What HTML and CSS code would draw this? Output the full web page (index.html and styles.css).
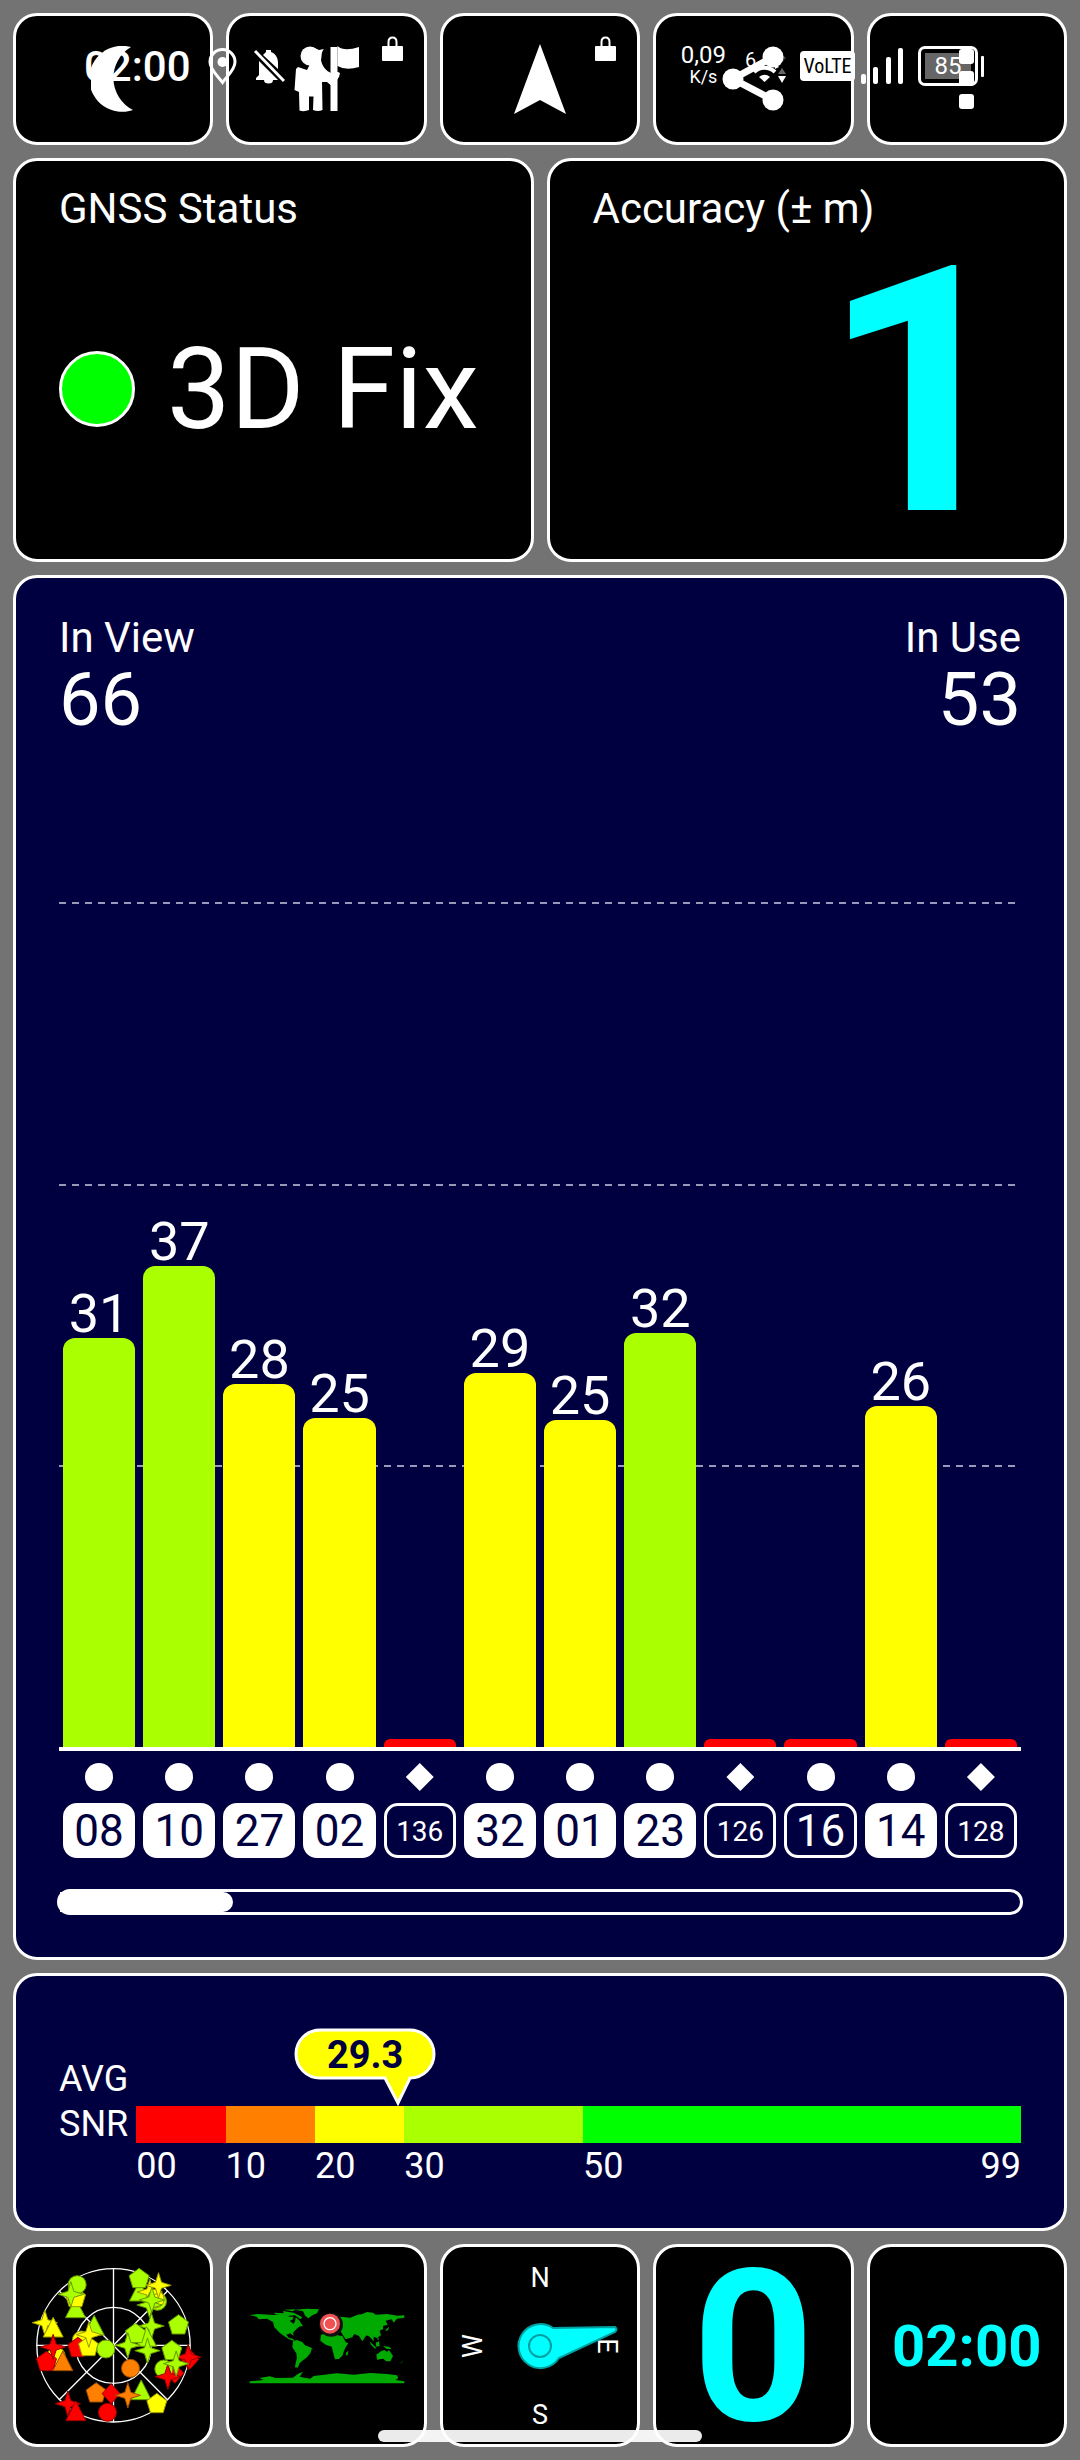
FILE: index.html
```html
<!DOCTYPE html>
<html lang="en">
<head>
    <meta charset="UTF-8">
    <meta name="viewport" content="width=device-width, initial-scale=1.0">
    <title>GNSS Status</title>
    <link rel="stylesheet" href="styles.css">
</head>
<body>
    <!-- System status bar, sits between the toolbar tiles and their icons -->
    <div class="status-bar">
        <div class="status-left">
            <span class="status-time">02:00</span>
            <svg width="29" height="37" viewBox="0 0 29 37" fill="none" stroke="#fff" stroke-width="3">
                <path d="M14.500 34.500C10 28 2 22 2 14A12.500 12.500 0 0 1 27 14C27 22 19 28 14.500 34.500Z"/>
                <circle cx="14.500" cy="14" r="5" fill="#fff" stroke="none"/>
            </svg>
            <svg width="31" height="35" viewBox="0 0 31 35" fill="#fff">
                <path d="M5 12L24 31H2V29L5 26Z"/>
                <path d="M9 6L12 3V1H17V3C22 5 24 9 24 14V20Z"/>
                <path d="M10 31H19A4.500 3.500 0 0 1 10 31Z"/>
                <path d="M1 2L30 32" stroke="#fff" stroke-width="3"/>
            </svg>
        </div>
        <div class="status-right">
            <span class="net-speed"><span>0,09</span><small>K/s</small></span>
            <svg width="46" height="37" viewBox="0 0 46 37">
                <text x="5" y="19" class="wifi-gen">6</text>
                <path d="M25 5A28 28 0 0 1 44 12" fill="none" stroke="#444" stroke-width="6"/>
                <path d="M14 24A15 15 0 0 1 35 24" fill="none" stroke="#fff" stroke-width="4"/>
                <path d="M34 14L39 19L35 21Z" fill="#fff"/>
                <path d="M24.500 34L19 29A8 8 0 0 1 30 29Z" fill="#fff"/>
                <path d="M38 26L42 20L46 26Z" fill="#666"/>
                <path d="M38 28H46L42 35Z" fill="#fff"/>
            </svg>
            <span class="signal">
                <span class="volte">VoLTE</span>
                <svg width="43" height="36" viewBox="0 0 43 36" fill="#fff">
                    <rect x="0" y="26" width="5" height="10" rx="2"/>
                    <rect x="12" y="19" width="5" height="17" rx="2"/>
                    <rect x="25" y="9" width="5" height="27" rx="2"/>
                    <rect x="37" y="0" width="5" height="36" rx="2"/>
                </svg>
            </span>
            <span class="battery"><span>85</span></span>
        </div>
    </div>

    <main class="app">
        <div class="tiles toolbar">
            <button class="tile" aria-label="Night mode">
                <svg width="44" height="66" viewBox="0 0 44 66" fill="#fff">
                    <path d="M40 1A33 33 0 1 0 42 64A36 36 0 0 1 40 1Z"/>
                </svg>
            </button>
            <button class="tile" aria-label="Waypoints">
                <svg width="65" height="66" viewBox="0 0 65 66" fill="#fff">
                    <circle cx="16" cy="10" r="9.500"/>
                    <path d="M18 1L25 4L30 3C27 6 28 10 27 14C28 20 32 25 37 27V26H44L46 27L45 31L40 38L36.500 39L33 36H28L28.500 64Q24 66 19 64L19.500 50.500H15V64Q10 66 5.500 64.500L5 46L0.500 44L2 23L4 21L13 24L16 18Z"/>
                    <path d="M36.500 1H43.500V65H36.500Z"/>
                    <path d="M43.500 0Q50 6 65 1V21Q52 25 43.500 20Z"/>
                </svg>
                <svg class="lock" width="21" height="25" viewBox="0 0 21 25">
                    <path d="M6.500 12V6Q6.500 1.500 10.500 1.500T14.500 6V12" fill="none" stroke="#fff" stroke-width="2"/>
                    <rect y="10" width="21" height="15" rx="1" fill="#fff"/>
                </svg>
            </button>
            <button class="tile" aria-label="Navigate">
                <svg width="52" height="70" viewBox="0 0 52 70" fill="#fff">
                    <path d="M26 0L52 70L26 56L0 70Z"/>
                </svg>
                <svg class="lock" width="21" height="25" viewBox="0 0 21 25">
                    <path d="M6.500 12V6Q6.500 1.500 10.500 1.500T14.500 6V12" fill="none" stroke="#fff" stroke-width="2"/>
                    <rect y="10" width="21" height="15" rx="1" fill="#fff"/>
                </svg>
            </button>
            <button class="tile" aria-label="Share">
                <svg width="62" height="66" viewBox="0 0 62 66" fill="#fff">
                    <path d="M51 11L11 33L51 54" fill="none" stroke="#fff" stroke-width="7"/>
                    <circle cx="51" cy="11" r="10.500"/>
                    <circle cx="11" cy="33" r="10.500"/>
                    <circle cx="51" cy="54" r="10.500"/>
                </svg>
            </button>
            <button class="tile" aria-label="More">
                <svg width="15" height="60" viewBox="0 0 15 60" fill="#fff">
                    <rect width="15" height="15" rx="3"/>
                    <rect y="22" width="15" height="15" rx="3"/>
                    <rect y="45" width="15" height="15" rx="3"/>
                </svg>
            </button>
        </div>

        <div class="readouts">
            <section class="readout">
                <h2>GNSS Status</h2>
                <div class="fix"><span class="led"></span>3D Fix</div>
            </section>
            <section class="readout">
                <h2>Accuracy (± m)</h2>
                <div class="accuracy">1</div>
            </section>
        </div>

        <section class="panel chart">
            <div class="chart-head">
                <div><h2>In View</h2><strong>66</strong></div>
                <div class="in-use"><h2>In Use</h2><strong>53</strong></div>
            </div>
            <div class="plot">
                <div class="grid-lines"><i></i><i></i><i></i></div>
                <div class="bars">
                    <div class="bar good" style="--h: 48.4%">31</div>
                    <div class="bar good" style="--h: 56.9%">37</div>
                    <div class="bar fair" style="--h: 43%">28</div>
                    <div class="bar fair" style="--h: 38.9%">25</div>
                    <div class="bar none" style="--h: 0.9%"></div>
                    <div class="bar fair" style="--h: 44.3%">29</div>
                    <div class="bar fair" style="--h: 38.7%">25</div>
                    <div class="bar good" style="--h: 49%">32</div>
                    <div class="bar none" style="--h: 0.9%"></div>
                    <div class="bar none" style="--h: 0.9%"></div>
                    <div class="bar fair" style="--h: 40.3%">26</div>
                    <div class="bar none" style="--h: 0.9%"></div>
                </div>
            </div>
            <div class="sats">
                <div class="sat"><i class="dot"></i><b class="used">08</b></div>
                <div class="sat"><i class="dot"></i><b class="used">10</b></div>
                <div class="sat"><i class="dot"></i><b class="used">27</b></div>
                <div class="sat"><i class="dot"></i><b class="used">02</b></div>
                <div class="sat"><i class="diamond"></i><b class="small">136</b></div>
                <div class="sat"><i class="dot"></i><b class="used">32</b></div>
                <div class="sat"><i class="dot"></i><b class="used">01</b></div>
                <div class="sat"><i class="dot"></i><b class="used">23</b></div>
                <div class="sat"><i class="diamond"></i><b class="small">126</b></div>
                <div class="sat"><i class="dot"></i><b>16</b></div>
                <div class="sat"><i class="dot"></i><b class="used">14</b></div>
                <div class="sat"><i class="diamond"></i><b class="small">128</b></div>
            </div>
            <div class="scroll-track"><div class="scroll-thumb"></div></div>
        </section>

        <section class="panel snr">
            <div class="snr-label">AVG<br>SNR</div>
            <div class="snr-scale">
                <div class="snr-bar">
                    <i class="s0"></i><i class="s10"></i><i class="s20"></i><i class="s30"></i><i class="s50"></i>
                    <div class="bubble" style="--snr: 29.3">
                        <svg width="142" height="78" viewBox="0 0 142 78" fill="#ffff00" stroke="#fff" stroke-width="3">
                            <path d="M26 2H116A24 24 0 0 1 116 50L104 75L91 50H26A24 24 0 0 1 26 2Z"/>
                        </svg>
                        <span>29.3</span>
                    </div>
                </div>
                <div class="snr-ticks">
                    <span>00</span><span>10</span><span>20</span><span>30</span><span class="last">50<em>99</em></span>
                </div>
            </div>
        </section>

        <nav class="tiles pages">
            <button class="tile" aria-label="Sky view">
                <svg width="187" height="191" viewBox="0 0 560 573">
                    <defs>
                        <circle id="circ" r="27"/>
                        <path id="star" d="M0 -38L9 -9L38 0L9 9L0 38L-9 9L-38 0L-9 -9Z"/>
                        <path id="pent" d="M0 -31L30 -9L19 27H-19L-30 -9Z"/>
                        <path id="tri" d="M0 -32L30 27H-30Z"/>
                        <path id="diam" d="M0 -30L27 0L0 30L-27 0Z"/>
                    </defs>
                    <g fill="none" stroke="#fff" stroke-width="4">
                        <circle cx="280" cy="286" r="230"/>
                        <circle cx="280" cy="286" r="114"/>
                        <path d="M280 56V516M50 286H510M117 123L442 449M442 123L117 449"/>
                    </g>
                    <g class="sky">
                        <use href="#tri" x="166" y="176" class="g"/>
                        <use href="#pent" x="166" y="143" class="y"/>
                        <use href="#circ" x="171" y="104" class="g"/>
                        <use href="#star" x="152" y="133" class="g"/>
                        <use href="#tri" x="358" y="126" class="g"/>
                        <use href="#pent" x="357" y="86" class="g"/>
                        <use href="#circ" x="412" y="154" class="g"/>
                        <use href="#circ" x="405" y="147" class="y"/>
                        <use href="#star" x="389" y="126" class="y"/>
                        <use href="#star" x="415" y="106" class="y"/>
                        <use href="#star" x="388" y="165" class="g"/>
                        <use href="#star" x="395" y="150" class="g"/>
                        <use href="#star" x="74" y="218" class="y"/>
                        <use href="#tri" x="99" y="234" class="y"/>
                        <use href="#tri" x="222" y="228" class="g"/>
                        <use href="#circ" x="184" y="270" class="y"/>
                        <use href="#pent" x="173" y="293" class="r"/>
                        <use href="#pent" x="205" y="290" class="y"/>
                        <use href="#star" x="206" y="254" class="y"/>
                        <use href="#circ" x="257" y="297" class="g"/>
                        <use href="#star" x="394" y="228" class="g"/>
                        <use href="#tri" x="379" y="262" class="g"/>
                        <use href="#pent" x="346" y="251" class="g"/>
                        <use href="#star" x="323" y="286" class="g"/>
                        <use href="#star" x="382" y="302" class="g"/>
                        <use href="#pent" x="475" y="225" class="g"/>
                        <use href="#circ" x="108" y="318" class="y"/>
                        <use href="#pent" x="79" y="335" class="r"/>
                        <use href="#star" x="99" y="291" class="r"/>
                        <use href="#tri" x="128" y="335" class="o"/>
                        <use href="#circ" x="331" y="355" class="o"/>
                        <use href="#diam" x="509" y="328" class="r"/>
                        <use href="#star" x="504" y="321" class="r"/>
                        <use href="#pent" x="455" y="302" class="g"/>
                        <use href="#diam" x="464" y="370" class="r"/>
                        <use href="#circ" x="431" y="357" class="g"/>
                        <use href="#star" x="443" y="380" class="r"/>
                        <use href="#star" x="468" y="341" class="g"/>
                        <use href="#pent" x="228" y="429" class="o"/>
                        <use href="#tri" x="363" y="422" class="g"/>
                        <use href="#diam" x="273" y="431" class="r"/>
                        <use href="#star" x="323" y="436" class="o"/>
                        <use href="#circ" x="262" y="487" class="r"/>
                        <use href="#pent" x="410" y="461" class="y"/>
                        <use href="#star" x="143" y="461" class="r"/>
                        <use href="#tri" x="167" y="485" class="r"/>
                    </g>
                </svg>
            </button>
            <button class="tile" aria-label="World map">
                <svg width="160" height="80" viewBox="740 230 480 240">
                    <g fill="#00aa00">
                        <path d="M748 258L772 254L820 257L850 256L868 262L880 262L876 272L868 274L880 284L884 276L886 264L896 272L902 282L908 290L896 292L888 300L878 310L880 320L870 312L858 316L866 326L878 328L884 336L866 330L848 318L838 310L822 294L818 278L800 268L776 270L768 262Z"/>
                        <path d="M822 250L850 252L848 245L880 250L892 256L906 264L900 270L884 258L860 260L824 255ZM850 241L885 240L878 246Z"/>
                        <path d="M884 241L920 238L956 240L950 252L936 258L924 267L915 260L908 246Z"/>
                        <path d="M878 336L890 332L906 338L914 348L935 356L930 372L920 384L906 394L898 402L892 415L884 414L886 400L890 386L888 372L876 354Z"/>
                        <path d="M962 316L984 311L1002 316L1026 320L1036 338L1044 342L1036 354L1031 364L1027 378L1016 389L1004 390L999 372L994 352L976 346L960 334ZM1037 370L1044 364L1042 378H1037Z"/>
                        <path d="M966 310L966 300L980 294L990 280L1000 266L1020 262L1050 265L1072 256L1086 254L1100 248L1118 250L1126 256L1160 254L1192 259L1212 258V265L1190 268L1180 280L1174 270L1156 274L1162 286L1148 290L1148 300L1138 304L1142 318L1130 326L1120 322L1120 336L1108 322L1098 318L1086 336L1076 320L1062 314L1056 324L1036 330L1028 318L1022 308L1000 306L984 308Z"/>
                        <path d="M1108 336L1120 348L1128 356L1124 358L1112 346ZM1126 340L1136 336L1138 350L1128 352ZM1130 320L1136 330L1132 332ZM1148 350L1166 352L1174 360L1158 358ZM1158 300L1166 292L1164 302L1154 306Z"/>
                        <path d="M1128 376L1142 366L1152 362L1160 368L1166 362L1178 380L1170 396L1158 396L1148 388L1130 391ZM1204 398L1210 394L1198 405Z"/>
                        <path d="M748 456L790 452L778 446L808 441L826 446L878 445L892 434L908 427L898 442L930 448L940 440L1010 432L1060 436L1110 431L1160 434L1190 438L1194 446L1186 452L1212 456V462H748Z"/>
                    </g>
                    <circle cx="992" cy="286" r="36" fill="#111"/>
                    <circle cx="989" cy="283" r="30" fill="#ee5253"/>
                    <circle cx="989" cy="283" r="18" fill="none" stroke="#fff" stroke-width="4"/>
                </svg>
            </button>
            <button class="tile" aria-label="Compass">
                <svg width="180" height="180" viewBox="-90 -90 180 180">
                    <g class="compass-letters">
                        <text y="-59">N</text>
                        <text y="78">S</text>
                        <text y="-58" transform="rotate(-90)">W</text>
                        <text y="-58" transform="rotate(90)">E</text>
                    </g>
                    <path d="M13 -18L75 -19Q78 -17 75 -14L19 12A22 22 0 1 1 13 -18Z" fill="#00ffff" stroke="#00a0a0" stroke-width="2"/>
                    <circle r="11" fill="none" stroke="#00a0a0" stroke-width="2"/>
                </svg>
            </button>
            <button class="tile speed">0</button>
            <button class="tile clock">02:00</button>
        </nav>
    </main>

    <div class="home-indicator"></div>
</body>
</html>
```
FILE: styles.css
```css
* {
    box-sizing: border-box;
}

body {
    margin: 0;
    position: relative;
    background-color: #737373;
    color: #fff;
    font-family: Roboto, sans-serif;
}

h2 {
    margin: 0;
    font-size: 42px;
    line-height: 48px;
    font-weight: 400;
}

.app {
    display: flex;
    flex-direction: column;
    gap: 13px;
    min-height: 100vh;
    padding: 13px;
}

/* tiles */
.tiles {
    display: grid;
    grid-template-columns: repeat(5, 1fr);
    gap: 13px;
}

.toolbar {
    grid-auto-rows: 132px;
}

.toolbar svg {
    z-index: 2;
}

.pages {
    grid-auto-rows: 203px;
}

.tile {
    position: relative;
    display: flex;
    align-items: center;
    justify-content: center;
    min-width: 0;
    padding: 0;
    background-color: #000;
    color: #00ffff;
    border: 3px solid #fff;
    border-radius: 24px;
    font-family: inherit;
    font-weight: 700;
    cursor: pointer;
}

.lock {
    position: absolute;
    top: 20px;
    right: 21px;
}

.speed {
    padding-top: 4px;
    font-size: 212px;
    line-height: 192px;
}

.clock {
    font-size: 58px;
}

.sky {
    stroke-width: 3;
}

.sky .g {
    fill: #aaff00;
    stroke: #669900;
}

.sky .y {
    fill: #ffff00;
    stroke: #999900;
}

.sky .o {
    fill: #ff8000;
    stroke: #994d00;
}

.sky .r {
    fill: #ff0000;
    stroke: #990000;
}

.compass-letters {
    fill: #fff;
    font-size: 27px;
    font-weight: 400;
    text-anchor: middle;
}

/* readouts */
.readouts {
    display: grid;
    grid-template-columns: 1fr 1fr;
    gap: 13px;
}

.readout {
    display: flex;
    flex-direction: column;
    min-height: 404px;
    padding: 24px 43px 6px;
    background-color: #000;
    border: 3px solid #fff;
    border-radius: 24px;
}

.fix {
    flex: 1;
    display: flex;
    align-items: center;
    gap: 32px;
    padding-bottom: 8px;
    font-size: 113px;
    white-space: nowrap;
}

.led {
    width: 76px;
    height: 76px;
    background-color: #00ff00;
    border: 3px solid #fff;
    border-radius: 50%;
}

.accuracy {
    flex: 1;
    padding-right: 2px;
    color: #00ffff;
    font-size: 344px;
    font-weight: 700;
    line-height: 320px;
    text-align: right;
}

/* panels */
.panel {
    background-color: #000040;
    border: 3px solid #fff;
    border-radius: 24px;
}

.chart {
    flex: 1;
    display: flex;
    flex-direction: column;
    padding: 36px 43px 42px;
}

.chart-head {
    display: flex;
    justify-content: space-between;
    margin-bottom: 164px;
}

.chart-head strong {
    display: block;
    font-size: 74px;
    line-height: 76px;
    font-weight: 400;
}

.in-use {
    text-align: right;
}

.plot {
    flex: 1;
    display: grid;
    min-height: 600px;
    border-bottom: 4px solid #fff;
}

.grid-lines,
.bars {
    grid-area: 1 / 1;
    display: grid;
}

.grid-lines i {
    height: 2px;
    background: repeating-linear-gradient(90deg, #9999bb 0 7px, transparent 7px 13px);
}

.bars {
    grid-template-columns: repeat(12, 1fr);
    gap: 8px;
    padding: 0 4px;
}

.bar {
    display: flex;
    flex-direction: column;
    justify-content: flex-end;
    font-size: 54px;
    line-height: 48px;
    text-align: center;
}

.bar::after {
    content: "";
    height: var(--h);
    border-radius: 12px 12px 0 0;
}

.good::after {
    background-color: #aaff00;
}

.fair::after {
    background-color: #ffff00;
}

.none::after {
    background-color: #ff0000;
    border-radius: 6px 6px 0 0;
}

.sats {
    display: grid;
    grid-template-columns: repeat(12, 1fr);
    gap: 8px;
    padding: 12px 4px 31px;
}

.sat {
    display: flex;
    flex-direction: column;
    align-items: center;
    gap: 12px;
}

.sat i {
    width: 28px;
    height: 28px;
    background-color: #fff;
}

.dot {
    border-radius: 50%;
}

.diamond {
    clip-path: polygon(50% 0, 100% 50%, 50% 100%, 0 50%);
}

.sat b {
    align-self: stretch;
    height: 55px;
    border: 3px solid #fff;
    border-radius: 14px;
    font-size: 44px;
    line-height: 51px;
    font-weight: 400;
    text-align: center;
}

.sat .used {
    background-color: #fff;
    color: #000040;
}

.sat .small {
    font-size: 28px;
}

.scroll-track {
    height: 26px;
    margin: 0 -2px;
    border: 3px solid #fff;
    border-radius: 13px;
}

.scroll-thumb {
    width: 18%;
    height: 100%;
    background-color: #fff;
    border-radius: 0 10px 10px 0;
}

/* average snr */
.snr {
    display: flex;
    gap: 8px;
    padding: 81px 43px 42px;
    font-size: 36px;
}

.snr-label {
    line-height: 45px;
}

.snr-scale {
    flex: 1;
    padding-top: 49px;
}

.snr-bar {
    position: relative;
    height: 37px;
}

.snr-bar,
.snr-ticks {
    display: grid;
    grid-template-columns: 10fr 10fr 10fr 20fr 49fr;
}

.snr-ticks {
    padding-top: 3px;
    line-height: 40px;
}

.s0 { background-color: #ff0000; }
.s10 { background-color: #ff8000; }
.s20 { background-color: #ffff00; }
.s30 { background-color: #aaff00; }
.s50 { background-color: #00ff00; }

.last {
    display: flex;
    justify-content: space-between;
}

.last em {
    font-style: normal;
}

.bubble {
    position: absolute;
    bottom: 100%;
    left: calc(var(--snr) / 99 * 100%);
    display: grid;
    margin-left: -104px;
    color: #000040;
    font-size: 38px;
    font-weight: 700;
    line-height: 55px;
    text-align: center;
}

.bubble svg,
.bubble span {
    grid-area: 1 / 1;
}

/* system bars */
.status-bar {
    position: absolute;
    z-index: 1;
    top: 42px;
    left: 0;
    right: 0;
    display: flex;
    justify-content: space-between;
    height: 48px;
    padding: 0 96px 0 84px;
    pointer-events: none;
}

.status-left,
.status-right,
.signal {
    display: flex;
    align-items: center;
}

.status-left {
    gap: 17px;
}

.status-right {
    gap: 14px;
}

.signal {
    gap: 6px;
}

.status-time {
    font-size: 42px;
    font-weight: 500;
}

.net-speed {
    font-size: 24px;
    line-height: 21px;
    text-align: center;
}

.net-speed small {
    display: block;
    font-size: 18px;
}

.wifi-gen {
    fill: #fff;
    font-size: 20px;
}

.volte {
    width: 55px;
    background-color: #fff;
    border-radius: 4px;
    color: #000;
    font-family: "Roboto Condensed", "Liberation Sans Narrow", Roboto, sans-serif;
    font-size: 20px;
    line-height: 30px;
    text-align: center;
}

.battery {
    position: relative;
    width: 60px;
    height: 40px;
    margin-right: 6px;
    padding: 4px;
    border: 3px solid #fff;
    border-radius: 7px;
    font-size: 24px;
    line-height: 26px;
    text-align: center;
}

.battery span {
    display: block;
    background-color: #666;
}

.battery::after {
    content: "";
    position: absolute;
    top: 7px;
    right: -9px;
    width: 3px;
    height: 21px;
    background-color: #fff;
    border-radius: 1px;
}

.home-indicator {
    position: absolute;
    bottom: 18px;
    left: 35%;
    width: 30%;
    height: 12px;
    background-color: rgba(255, 255, 255, 0.92);
    border-radius: 6px;
}
```
